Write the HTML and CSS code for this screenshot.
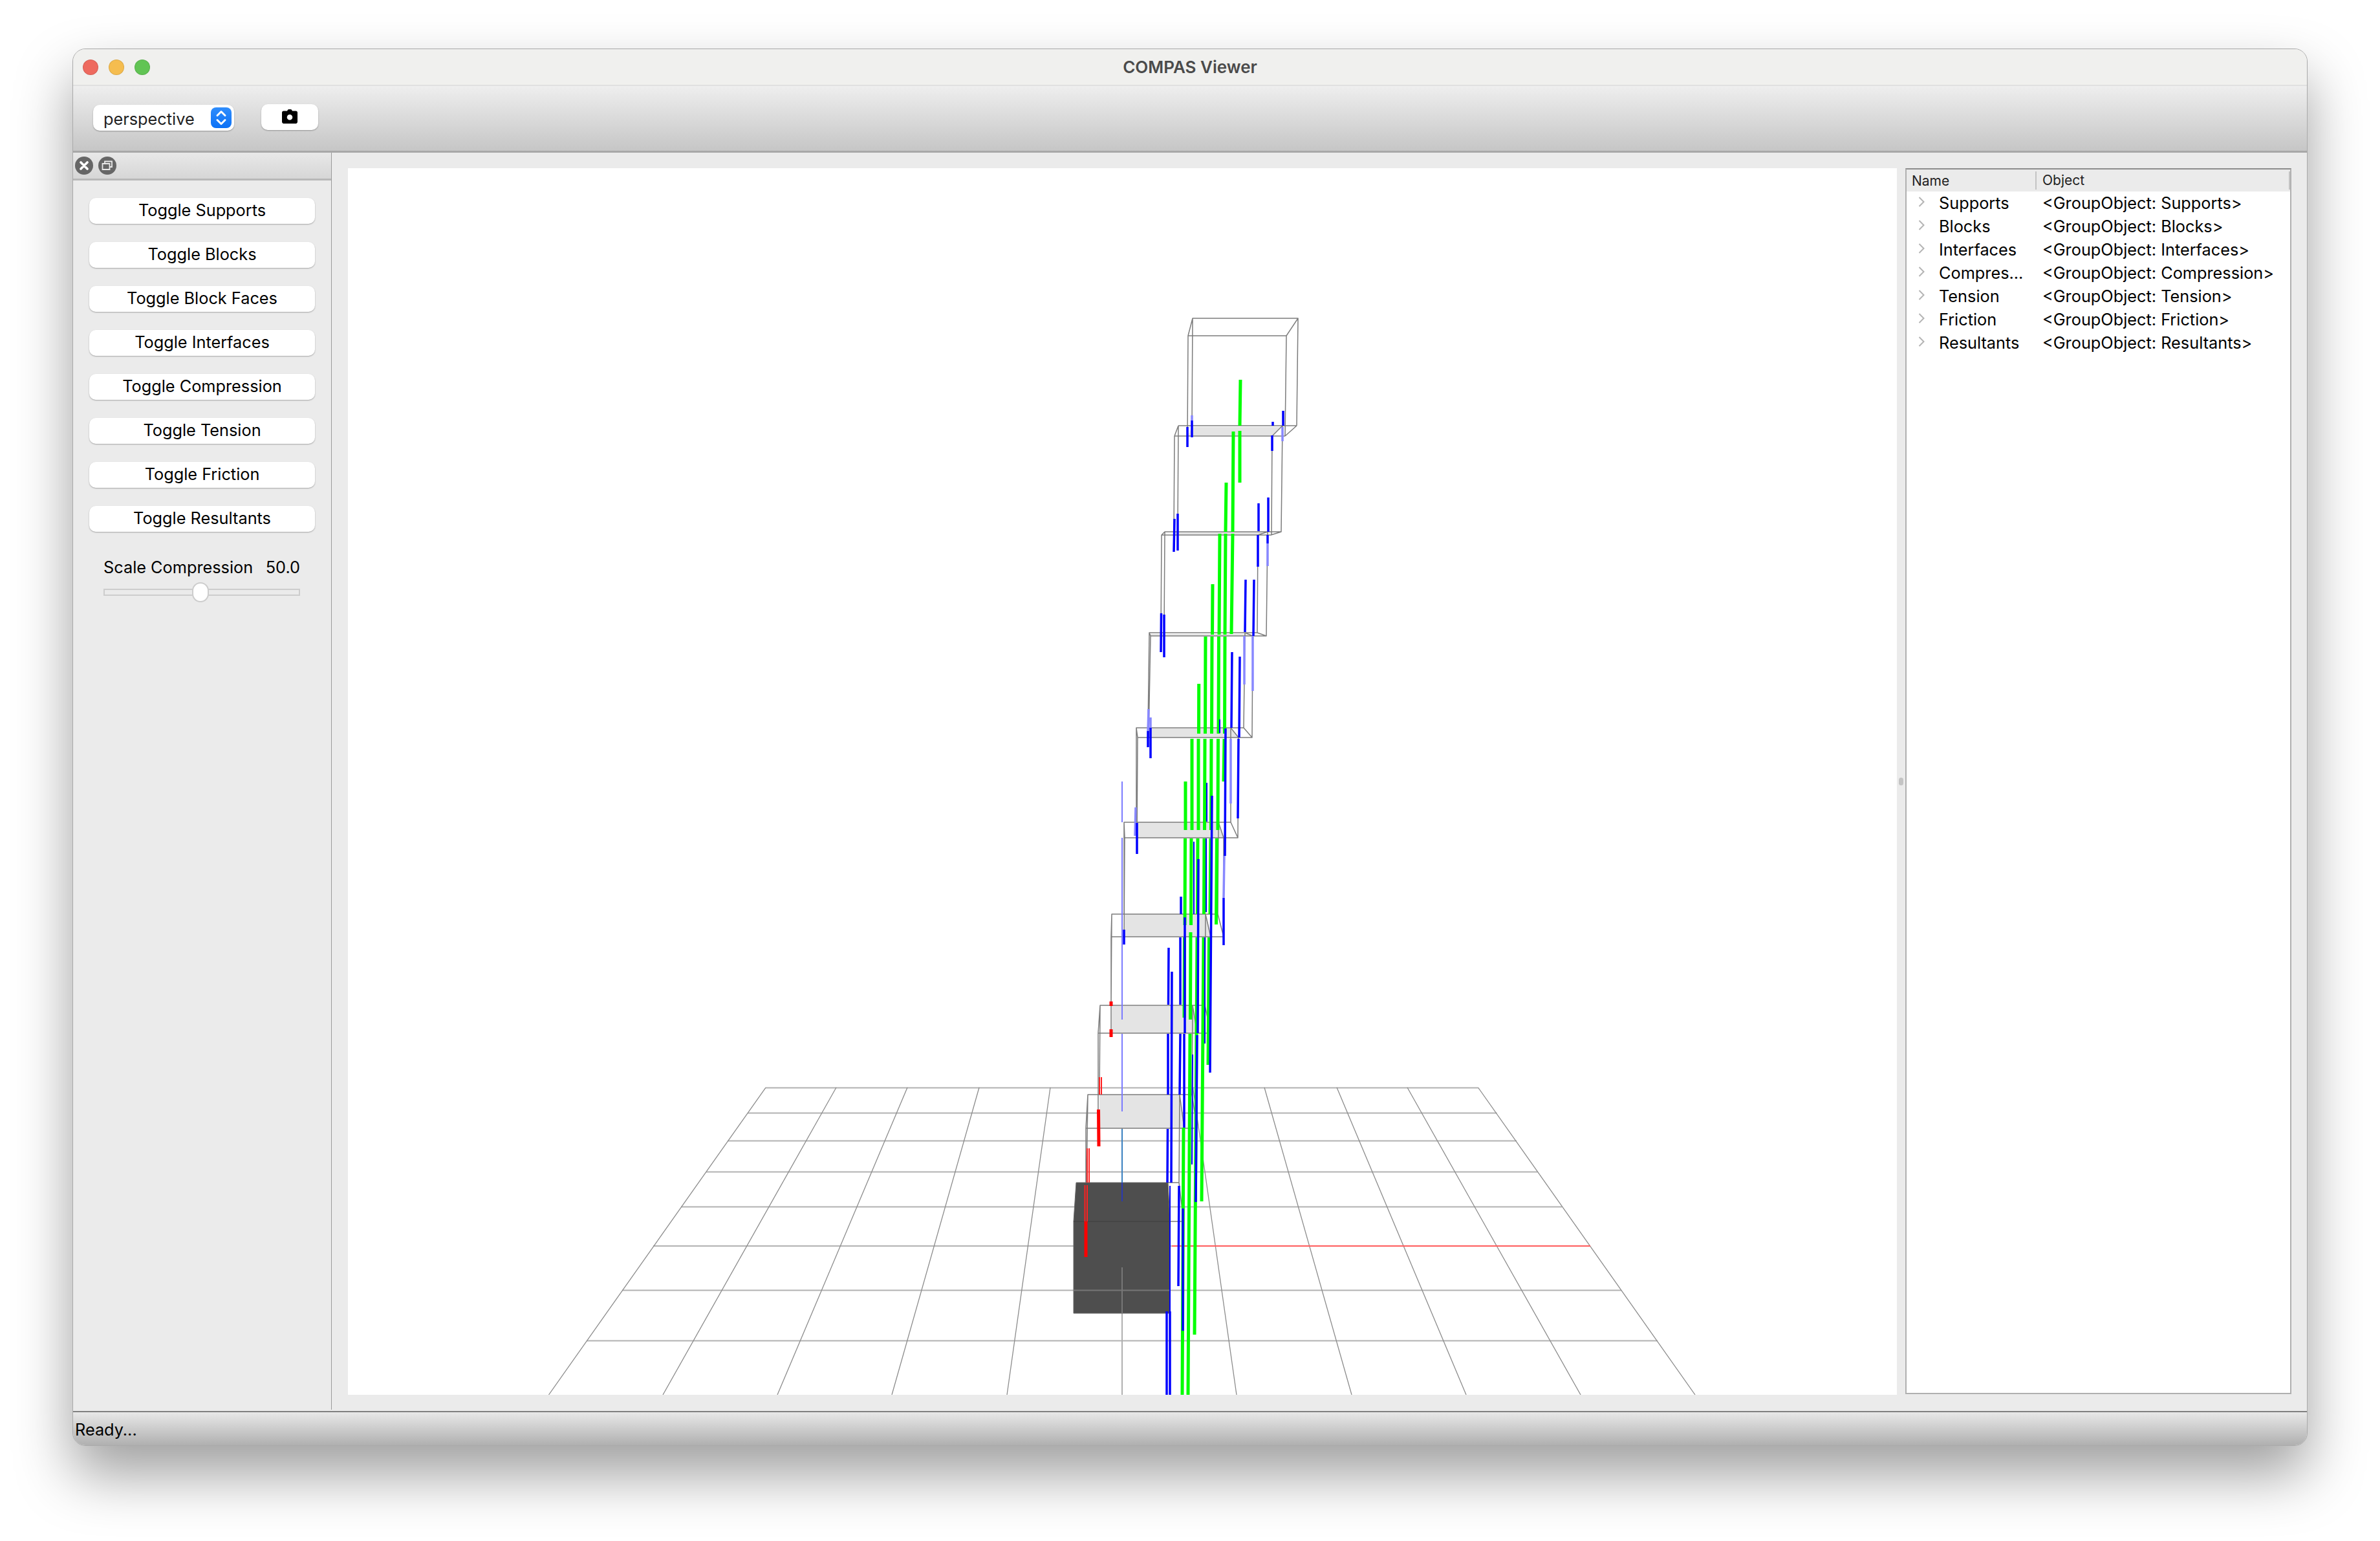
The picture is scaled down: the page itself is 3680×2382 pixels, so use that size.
FILE: index.html
```html
<!DOCTYPE html>
<html lang="en">
<head>
<meta charset="utf-8">
<title>COMPAS Viewer</title>
<link rel="stylesheet" href="styles.css">
</head>
<body>
<div class="window">
  <header class="titlebar">
    <div class="lights"><span class="light red"></span><span class="light yellow"></span><span class="light green"></span></div>
    <div class="title">COMPAS Viewer</div>
  </header>
  <div class="toolbar">
    <div class="select">
      <span class="select-text">perspective</span>
      <span class="stepper">
        <svg width="32" height="32" viewBox="0 0 32 32"><path d="M10 12.5 16 6.5 22 12.5M10 19.5 16 25.5 22 19.5" fill="none" stroke="#fff" stroke-width="3" stroke-linecap="round" stroke-linejoin="round"/></svg>
      </span>
    </div>
    <button class="camera">
      <svg width="24" height="22" viewBox="0 0 24 22"><path fill-rule="evenodd" d="M8 2.5 9.2.6C9.5.2 10 0 10.5 0h3c.5 0 1 .2 1.300.6L16 2.500h5.500C23 2.500 24 3.500 24 5v14c0 1.600-1 3-2.500 3h-19C1 22 0 20.600 0 19V5c0-1.500 1-2.500 2.500-2.500H8ZM12 8a4.300 4.300 0 1 0 0 8.600 4.300 4.300 0 0 0 0-8.600Z"/></svg>
    </button>
  </div>
  <div class="main">
    <aside class="sidebar">
      <div class="dock-head">
        <span class="dock-btn"><svg width="28" height="28" viewBox="0 0 28 28"><path d="M9 9 19 19M19 9 9 19" stroke="#fff" stroke-width="3.600" stroke-linecap="round"/></svg></span>
        <span class="dock-btn"><svg width="28" height="28" viewBox="0 0 28 28"><path d="M10 10V7.500h11V16h-3M6.500 11h11v9h-11Z" fill="none" stroke="#e8e8e8" stroke-width="1.800"/></svg></span>
      </div>
      <div class="dock-body">
        <button class="btn">Toggle Supports</button>
        <button class="btn">Toggle Blocks</button>
        <button class="btn">Toggle Block Faces</button>
        <button class="btn">Toggle Interfaces</button>
        <button class="btn">Toggle Compression</button>
        <button class="btn">Toggle Tension</button>
        <button class="btn">Toggle Friction</button>
        <button class="btn">Toggle Resultants</button>
        <div class="scale">
          <div class="scale-label"><span>Scale Compression</span><span>50.0</span></div>
          <div class="slider"><span class="thumb"></span></div>
        </div>
      </div>
    </aside>
    <div class="central">
      <div class="canvas">
        <svg class="scene" width="2395" height="1896" viewBox="538 260 2395 1896">
          <path class="grid-h" d="M1184 1681.500H2285.500M1156 1720.500H2314.500M1125 1763.500H2345M1092 1811.500H2377.500M1053 1865.500H2415M1010 1926H2459M962 1994.500H2507M907 2072.500H2563"/>
          <path class="grid-v" d="M1184 1681 848.500 2156M1293 1681 1025 2156M1403 1681 1202 2156M1514 1681 1379 2156M1624 1681 1557 2156M1844.500 1681 1912 2156M1955 1681 2090 2156M2067 1681 2267 2156M2176 1681 2444 2156M2285.500 1681 2621 2156"/>
          <path class="grid-c" d="M1735 1681V2156"/>
          <path class="axis-x" d="M1812 1926H2459"/>
          <path class="face" d="M1843 660H1980L1967 673H1837ZM1815 823H1958L1945 827H1815ZM1779 980H1925L1937 983H1779ZM1778 1126H1903L1915 1140H1778ZM1758 1271H1885L1892 1295H1758ZM1738 1413H1864L1872 1448H1738ZM1719 1555H1844L1851 1597H1719ZM1700 1692H1824L1831 1744H1700Z"/>
          <path class="box" d="M1664 1828H1806L1809 1888V2030H1660V1888Z"/>
          <path class="box-edge" d="M1660 1888H1809"/>
          <path class="box-grid" d="M1660 1994.500H1809M1735 1959V2030"/>
          <path class="wire" d="M1844 492H2007L1989 519H1837ZM1844 492 1843 658M2007 492 2005 658M1837 519 1836 674M1989 519 1987 674M2005 658 1987 674M1822 658H2005M1816 674H1987M1822 658 1816 674M1983 658 1967 674M1822 658 1821 822M1816 674 1815 827M1983 658 1981 822M1967 674 1966 827M1801 822H1981L1965 827H1796ZM1960 822 1945 827M1801 822 1800 978M1796 827 1795 983M1960 822 1958 983M1945 827 1944 978M1777 978H1944L1958 983H1779ZM1925 978 1937 983M1777 978 1775 1125M1779 983 1776 1140M1925 978 1923 1125M1937 983 1936 1140M1757 1125H1923L1936 1140H1759ZM1903 1125 1915 1140M1757 1125 1757 1271M1759 1140 1758 1295M1903 1125 1903 1271M1915 1140 1914 1295M1738 1271H1903L1914 1295H1739ZM1884 1271 1892 1295M1738 1271 1738 1413M1739 1295 1738 1448M1884 1271 1883 1413M1892 1295 1892 1448M1719 1413H1883L1892 1448H1718ZM1864 1413 1872 1448M1719 1413 1718 1554M1718 1448 1718 1597M1864 1413 1863 1554M1872 1448 1872 1597M1701 1554H1863L1872 1597H1698ZM1844 1554 1851 1597M1701 1554 1700 1692M1698 1597 1698 1744M1844 1554 1843 1692M1851 1597 1850 1744M1682 1692H1843L1851 1744H1679ZM1824 1692 1831 1744M1682 1692 1680 1828M1679 1744 1679 1828M1824 1692 1823 1828M1831 1744 1830 1888M1806 1828H1823L1830 1888H1809"/>
          <path class="green" d="M1918 587 1917 658M1917 666V746M1907 667 1906 822M1906 825 1904 980M1896 746 1895 822M1895 825 1894 981M1894 984 1893.500 1134M1893 1142 1892 1208M1886 825 1885 981M1884.500 984 1884 1134M1883.500 1142 1883 1283M1881.500 1296 1880.500 1429M1875 903 1874.500 981M1874 984 1873.500 1134M1873 1142 1872.500 1283M1872 1296 1871 1413M1869.500 1449 1868 1646M1864 984 1863.500 1134M1863 1142 1862.500 1283M1862 1296 1861.500 1413M1861 1449 1858 1857M1853.700 1057 1853.500 1134M1853 1142V1283M1852 1296 1851.500 1413M1851 1449 1847 2063M1843 1142V1283M1842 1296 1841.500 1430M1841 1441 1840.500 1576M1840 1598 1837 2156M1833 1208V1283M1832.500 1296 1832 1430M1831.500 1449 1831 1573M1830 1743 1828 2156"/>
          <path class="blue-light" d="M1843 642V650M1983 660 1983 682M1960 840 1960 875M1924 983V1058M1937 983V1068M1903 1142V1242M1893 1323 1892 1388M1756 1248 1755 1292M1776 1096 1775 1130M1779 1109V1125"/>
          <path class="blue" d="M1836 660V691M1843 650V676M1968 652V658M1967 673V697M1984 635V658M1821 794V851M1816 802 1815 853M1946 778V821M1945 827V876M1961 769V822M1960 827V840M1926 896 1925 977M1939 896 1938 983M1795.500 948 1795 1008M1800 950V1016M1905 1008 1904 1125M1917 1015 1916 1140M1915 1142 1914 1265M1895 1126 1894 1323M1892 1388V1461M1874 1230 1871 1658M1853 1328 1852 1597M1851 1600 1849 1858M1832 1418V1597M1831 1598V1743M1829 1868V2057M1826 1386V1413M1825 1449V1553M1825 1598 1824 1692M1823 1833 1822 1988M1807 1465 1806.500 1553M1806 1598V1692M1805.500 1745 1805 1828M1804 2027V2156M1812 1502 1811 1828M1809 2027V2156M1758 1272V1320M1775 1130V1155M1779 1125V1172M1738 1437V1460"/>
          <path class="blue-thin" d="M1809 1833V2030M1886 1112V1133M1866 1210V1270M1865 1296V1410M1863 1449V1613M1846 1301V1413M1844 1630 1843 1800"/>
          <path class="tie" d="M1735 1208V1271M1735 1295V1576M1735 1598V1718"/>
          <path class="tie-teal" d="M1735 1745V1828"/>
          <path class="tie-dark" d="M1735 1828V1857"/>
          <path class="red" d="M1718 1548V1555M1718 1591V1603M1698.500 1715 1699 1772M1679 1888 1679 1943"/>
          <path class="red-thin" d="M1700 1665V1692M1703 1665V1692M1681 1775V1828M1684 1775V1828M1677.500 1832V1888M1681 1832V1888"/>
        </svg>
      </div>
      <div class="splitter"><span class="handle"></span></div>
      <div class="tree">
        <div class="tree-head">
          <div class="col-name">Name</div>
          <div class="col-object">Object</div>
        </div>
        <div class="tree-row"><svg class="chev" width="10" height="16" viewBox="0 0 10 16"><path d="M1.500 1 8.500 8 1.500 15"/></svg><span class="cell-name">Supports</span><span>&lt;GroupObject: Supports&gt;</span></div>
        <div class="tree-row"><svg class="chev" width="10" height="16" viewBox="0 0 10 16"><path d="M1.500 1 8.500 8 1.500 15"/></svg><span class="cell-name">Blocks</span><span>&lt;GroupObject: Blocks&gt;</span></div>
        <div class="tree-row"><svg class="chev" width="10" height="16" viewBox="0 0 10 16"><path d="M1.500 1 8.500 8 1.500 15"/></svg><span class="cell-name">Interfaces</span><span>&lt;GroupObject: Interfaces&gt;</span></div>
        <div class="tree-row"><svg class="chev" width="10" height="16" viewBox="0 0 10 16"><path d="M1.500 1 8.500 8 1.500 15"/></svg><span class="cell-name">Compres...</span><span>&lt;GroupObject: Compression&gt;</span></div>
        <div class="tree-row"><svg class="chev" width="10" height="16" viewBox="0 0 10 16"><path d="M1.500 1 8.500 8 1.500 15"/></svg><span class="cell-name">Tension</span><span>&lt;GroupObject: Tension&gt;</span></div>
        <div class="tree-row"><svg class="chev" width="10" height="16" viewBox="0 0 10 16"><path d="M1.500 1 8.500 8 1.500 15"/></svg><span class="cell-name">Friction</span><span>&lt;GroupObject: Friction&gt;</span></div>
        <div class="tree-row"><svg class="chev" width="10" height="16" viewBox="0 0 10 16"><path d="M1.500 1 8.500 8 1.500 15"/></svg><span class="cell-name">Resultants</span><span>&lt;GroupObject: Resultants&gt;</span></div>
      </div>
    </div>
  </div>
  <footer class="status">Ready...</footer>
</div>
</body>
</html>
```
FILE: styles.css
```css
* { box-sizing: border-box; }
html, body { margin: 0; height: 100%; }
body {
  padding: 75px 0 0 112px;
  background: #fff;
  font-family: Inter, "Liberation Sans", sans-serif;
  font-size: 25.3px;
  color: #000;
  overflow: hidden;
}
.window {
  width: 3456px;
  height: 2160px;
  display: flex;
  flex-direction: column;
  border: 1px solid #aaa;
  border-radius: 20px;
  overflow: hidden;
  background: #ebebeb;
  box-shadow: 0 44px 88px rgba(0,0,0,.38);
}
.titlebar {
  flex: none;
  height: 57px;
  display: flex;
  align-items: center;
  justify-content: center;
  position: relative;
  background: #f0f0ee;
  border-bottom: 2px solid #e0e0e0;
}
.lights { position: absolute; left: 15px; top: 16px; display: flex; gap: 16px; }
.light { width: 24px; height: 24px; border-radius: 50%; border: 1px solid rgba(0,0,0,.1); }
.red { background: #ee6a5f; }
.yellow { background: #f5bd4f; }
.green { background: #61c454; }
.title { font-weight: 600; color: #4a4a4a; font-size: 26px; }
.toolbar {
  flex: none;
  height: 103px;
  display: flex;
  align-items: flex-start;
  padding: 29px 0 0 31px;
  gap: 42px;
  background: linear-gradient(#eeeeee, #c6c6c6);
  border-bottom: 3px solid #a8a8a8;
}
.select {
  width: 218px;
  height: 40px;
  padding: 0 4px 0 16px;
  display: flex;
  align-items: center;
  justify-content: space-between;
  background: #fff;
  border-radius: 10px;
  color: #222;
  box-shadow: 0 1px 2px rgba(0,0,0,.3);
}
.select-text { padding-top: 2px; }
.stepper {
  width: 32px;
  height: 32px;
  border-radius: 8px;
  background: linear-gradient(#2f8dfc, #0b71f6);
  display: flex;
}
.camera {
  width: 88px;
  height: 40px;
  margin-top: -1px;
  padding: 0 0 3px;
  display: flex;
  align-items: center;
  justify-content: center;
  border: 0;
  background: #fff;
  border-radius: 10px;
  box-shadow: 0 1px 2px rgba(0,0,0,.3);
}
.main { flex: 1; display: flex; min-height: 0; }
.sidebar {
  flex: none;
  width: 400px;
  display: flex;
  flex-direction: column;
  border-right: 1px solid #9a9a9a;
  margin-bottom: 2px;
}
.dock-head {
  flex: none;
  height: 43px;
  display: flex;
  align-items: center;
  gap: 8px;
  padding: 0 0 0 3px;
  background: linear-gradient(#e8e8e8, #d6d6d6);
  border-bottom: 3px solid #b8b8b8;
}
.dock-btn { width: 28px; height: 28px; border-radius: 50%; background: #666; display: flex; }
.dock-body {
  flex: 1;
  display: flex;
  flex-direction: column;
  gap: 28px;
  padding: 27px 25px 0;
}
.btn {
  height: 40px;
  border: 0;
  padding: 0 0 4px;
  background: #fff;
  border-radius: 10px;
  font: inherit;
  color: #000;
  box-shadow: 0 1px 2px rgba(0,0,0,.3);
}
.scale { padding: 12px 23px 0 22px; }
.scale-label { display: flex; justify-content: space-between; line-height: 30px; }
.slider {
  position: relative;
  height: 11px;
  margin-top: 18px;
  background: #ebebeb;
  border: 2px solid #cdcdcd;
}
.thumb {
  position: absolute;
  left: 135px;
  top: -12px;
  width: 26px;
  height: 31px;
  border-radius: 13px;
  background: #fff;
  border: 2px solid #cdcdcd;
}
.central { flex: 1; display: flex; padding: 24px 25px 24px 25px; min-width: 0; }
.canvas { flex: none; width: 2395px; height: 1896px; background: #fff; }
.scene { display: block; fill: none; }
.splitter { flex: none; width: 13px; position: relative; }
.handle { position: absolute; left: 3px; top: 942px; width: 7px; height: 12px; border-radius: 4px; background: #c4c4c4; }
.tree {
  flex: none;
  width: 597px;
  height: 1895px;
  background: #fff;
  border: 2px solid #b0b0b0;
  border-top-color: #8c8c8c;
}
.tree-head { height: 34px; display: flex; align-items: center; background: #ebebeb; font-size: 21px; color: #222; }
.col-name { width: 199px; padding-left: 8px; }
.col-object { flex: 1; padding-left: 9px; border-left: 2px solid #c4c4c4; height: 28px; line-height: 28px; border-right: 2px solid #c4c4c4; }
.tree-row { height: 36px; display: flex; align-items: center; padding: 0 0 2px 18px; }
.chev { flex: none; fill: none; stroke: #b4b4b4; stroke-width: 2; margin-right: 22px; margin-top: -2px; }
.cell-name { flex: none; width: 160px; }
.status {
  flex: none;
  height: 53px;
  padding: 10px 0 0 3px;
  line-height: 34px;
  background: linear-gradient(#e8e8e8, #b0b0b0);
  border-top: 2px solid #808080;
}
.grid-h { stroke: #b2b2b2; stroke-width: 2; }
.grid-v { stroke: #8c8c8c; stroke-width: 1.300; }
.grid-c { stroke: #b0b0b0; stroke-width: 2; }
.axis-x { stroke: #ff5c5c; stroke-width: 2; }
.face { fill: #e4e4e4; }
.box { fill: #4e4e4e; stroke: #666; stroke-width: 1; }
.box-edge { stroke: #454545; stroke-width: 2; }
.box-grid { stroke: #777; stroke-width: 2; }
.wire { stroke: #7c7c7c; stroke-width: 1.500; stroke-linejoin: round; }
.green { stroke: #00ff00; stroke-width: 5; }
.blue { stroke: #0000ff; stroke-width: 3.500; }
.blue-light { stroke: #8888ff; stroke-width: 3.500; }
.blue-thin { stroke: #0000ff; stroke-width: 2; }
.tie { stroke: #7c7cff; stroke-width: 2; }
.tie-teal { stroke: #3a80c0; stroke-width: 2; }
.tie-dark { stroke: #2a3ab0; stroke-width: 2; }
.red { stroke: #ff0000; stroke-width: 5; }
.red-thin { stroke: #ff2020; stroke-width: 2; }
```
